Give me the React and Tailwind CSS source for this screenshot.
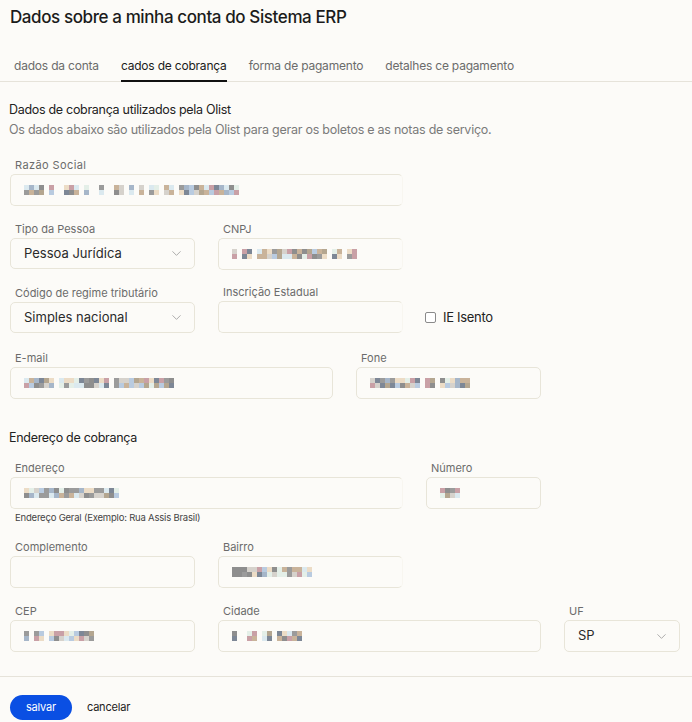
import React from "react";
import { ChevronDown } from "lucide-react";

// Paleta para os valores borrados (mosaico)
const palette = [
  "#8e8e8e", "#a6b6c9", "#c9b39a", "#ecdcc6", "#b9cbe0", "#dbe9ef",
  "#9b9b9b", "#c9a0a6", "#e4efe8", "#7d8796", "#b4a690", "#d6d2cc",
];

// Mosaico pseudo-aleatório para simular dados ocultos
const Pixels = ({ count, seed, gaps = [] }) => {
  const cells = [];
  let s = seed;
  const next = () => {
    s = (s * 9301 + 49297) % 233280;
    return s / 233280;
  };
  for (let i = 0; i < count; i++) {
    const blank = gaps.includes(i);
    cells.push(
      <div key={i} className="flex flex-col">
        <div className="w-[5px] h-[5px]" style={{ background: blank ? "transparent" : palette[Math.floor(next() * palette.length)] }} />
        <div className="w-[5px] h-[5px]" style={{ background: blank ? "transparent" : palette[Math.floor(next() * palette.length)] }} />
      </div>
    );
  }
  return <div className="flex">{cells}</div>;
};

const Label = ({ children, className = "" }) => (
  <label className={`block text-[11px] leading-4 text-[#6b6b6b] pl-[5px] mb-[1px] ${className}`}>{children}</label>
);

const Box = ({ width, children, clipped, className = "" }) => (
  <div
    className={`h-[32px] rounded-[5px] border border-[#e8e5d9] bg-[#fcfbf8] flex items-center px-[13px] ${clipped ? "border-r-[#f8f6f0]" : ""} ${className}`}
    style={{ width }}
  >
    {children}
  </div>
);

const Select = ({ width, value, className = "" }) => (
  <div
    className={`h-[31px] rounded-[5px] border border-[#e8e5d9] bg-[#fcfbf8] flex items-center justify-between pl-[13px] pr-[10px] text-[13px] text-[#2a2a2a] ${className}`}
    style={{ width }}
  >
    <span>{value}</span>
    <ChevronDown size={15} strokeWidth={1.3} className="text-[#9a9a9a]" />
  </div>
);

const tabs = ["dados da conta", "cados de cobrança", "forma de pagamento", "detalhes ce pagamento"];

const App = () => {
  return (
    <div className="min-h-screen w-[692px] bg-[#fcfbf8] text-[#1f1f1f] overflow-hidden" style={{ fontFamily: "Inter, 'Noto Sans', sans-serif" }}>
      {/* Título */}
      <h1 className="px-[10px] pt-[5px] text-[17px] leading-6 tracking-[-0.4px] text-[#1b1b1b] font-[450]">
        Dados sobre a minha conta do Sistema ERP
      </h1>

      {/* Abas */}
      <div className="mt-[27px] border-b border-[#e6e3da] flex pl-[14px] gap-[22px]">
        {tabs.map((t, i) => (
          <div
            key={t}
            className={`pb-[4px] text-[12px] leading-5 tracking-[-0.2px] ${i === 1 ? "text-[#1b1b1b] border-b-2 border-[#111] -mb-px" : "text-[#6b6b6b]"}`}
          >
            {t}
          </div>
        ))}
      </div>

      {/* Cabeçalho da seção */}
      <div className="px-[9px] mt-[18px]">
        <p className="text-[12.5px] leading-5 tracking-[-0.3px] text-[#222]">Dados de cobrança utilizados pela Olist</p>
        <p className="text-[12.5px] leading-5 tracking-[-0.25px] text-[#7a7a7a]">
          Os dados abaixo são utilizados pela Olist para gerar os boletos e as notas de serviço.
        </p>
      </div>

      <div className="px-[10px] mt-[17px] flex flex-col">
        {/* Razão Social */}
        <div>
          <Label className="tracking-[0.4px]">Razão Social</Label>
          <Box width={393} clipped>
            <Pixels count={43} seed={7} gaps={[4, 6, 7, 11, 13, 14, 16, 17, 20, 22, 24, 27, 30]} />
          </Box>
        </div>

        {/* Tipo da Pessoa / CNPJ */}
        <div className="flex gap-[23px] mt-[15px]">
          <div>
            <Label>Tipo da Pessoa</Label>
            <Select width={185} value="Pessoa Jurídica" className="h-[30px]" />
          </div>
          <div>
            <Label>CNPJ</Label>
            <Box width={185} clipped className="h-[30px]">
              <Pixels count={25} seed={19} gaps={[1, 4, 19, 22]} />
            </Box>
          </div>
        </div>

        {/* Regime / Inscrição / IE Isento */}
        <div className="flex gap-[23px] mt-[14px] items-end">
          <div>
            <Label>Código de regime tributário</Label>
            <Select width={185} value="Simples nacional" />
          </div>
          <div>
            <Label>Inscrição Estadual</Label>
            <Box width={185} clipped className="h-[31px]" />
          </div>
          <div className="flex items-center gap-[7px] h-[31px] -ml-[1px]">
            <div className="w-[11px] h-[11px] border border-[#8a8a8a] rounded-[2px] bg-white" />
            <span className="text-[13px] text-[#222] tracking-[-0.3px]">IE Isento</span>
          </div>
        </div>

        {/* E-mail / Fone */}
        <div className="flex gap-[23px] mt-[17px]">
          <div>
            <Label>E-mail</Label>
            <Box width={323}>
              <Pixels count={30} seed={31} gaps={[6, 17]} />
            </Box>
          </div>
          <div>
            <Label>Fone</Label>
            <Box width={185}>
              <Pixels count={20} seed={43} gaps={[10, 13]} />
            </Box>
          </div>
        </div>

        {/* Endereço de cobrança */}
        <p className="mt-[29px] text-[12.5px] leading-5 tracking-[-0.3px] text-[#222] -ml-px">Endereço de cobrança</p>

        <div className="flex gap-[23px] mt-[12px]">
          <div>
            <Label>Endereço</Label>
            <Box width={393} clipped>
              <Pixels count={19} seed={53} />
            </Box>
            <p className="text-[9.5px] leading-4 text-[#444] pl-[5px] mt-[1px] tracking-[-0.2px]">
              Endereço Geral (Exemplo: Rua Assis Brasil)
            </p>
          </div>
          <div>
            <Label>Número</Label>
            <Box width={115}>
              <Pixels count={4} seed={61} />
            </Box>
          </div>
        </div>

        {/* Complemento / Bairro */}
        <div className="flex gap-[23px] mt-[13px]">
          <div>
            <Label>Complemento</Label>
            <Box width={185} />
          </div>
          <div>
            <Label>Bairro</Label>
            <Box width={185} clipped>
              <Pixels count={16} seed={71} />
            </Box>
          </div>
        </div>

        {/* CEP / Cidade / UF */}
        <div className="flex gap-[23px] mt-[15px]">
          <div>
            <Label>CEP</Label>
            <Box width={185}>
              <Pixels count={14} seed={83} gaps={[1, 4]} />
            </Box>
          </div>
          <div>
            <Label>Cidade</Label>
            <Box width={323}>
              <Pixels count={14} seed={97} gaps={[1, 2, 5, 8]} />
            </Box>
          </div>
          <div>
            <Label>UF</Label>
            <Select width={116} value="SP" className="h-[32px]" />
          </div>
        </div>
      </div>

      {/* Rodapé */}
      <div className="mt-[24px] border-t border-[#e6e3da] px-[10px] pt-[18px] flex items-center gap-[15px]">
        <button className="h-[25px] px-[16px] rounded-full bg-[#0a4fe3] text-white text-[11px] tracking-[-0.2px]">salvar</button>
        <button className="text-[11px] text-[#222] tracking-[-0.2px]">cancelar</button>
      </div>
    </div>
  );
};

export default App;
